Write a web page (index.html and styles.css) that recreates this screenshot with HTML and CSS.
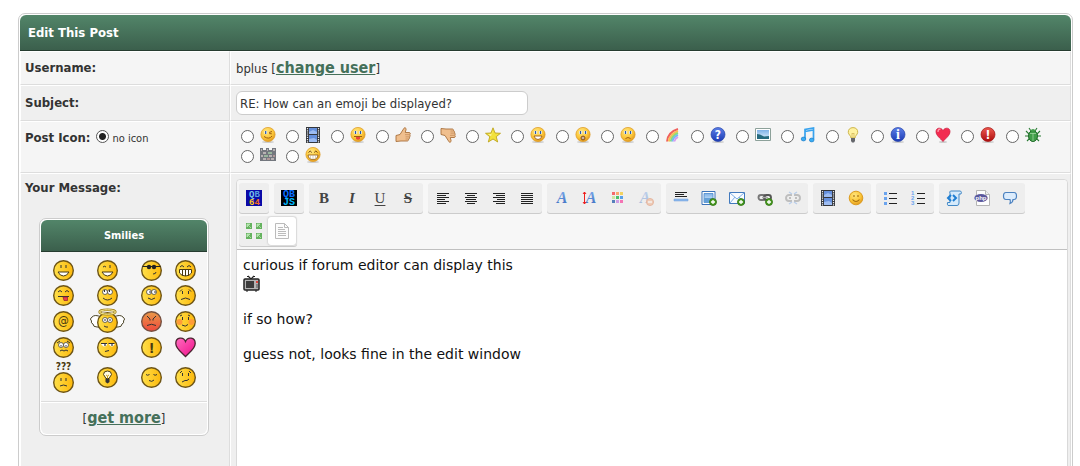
FILE: index.html
```html
<!DOCTYPE html>
<html lang="en">
<head>
  <meta charset="UTF-8">
  <title>Edit This Post</title>
  <link rel="stylesheet" href="styles.css">
</head>
<body>

  <!-- shared icon parts -->
  <svg class="sprite" aria-hidden="true">
    <defs>
      <linearGradient id="gold" x1="0" y1="0" x2="1" y2="0">
        <stop offset="0" stop-color="#ffe04a"/><stop offset="1" stop-color="#fcb80c"/>
      </linearGradient>
      <linearGradient id="angry" x1="0" y1="0" x2="0" y2="1">
        <stop offset="0" stop-color="#e89a48"/><stop offset="1" stop-color="#f0483c"/>
      </linearGradient>
      <radialGradient id="shiny" cx=".4" cy=".3" r=".75">
        <stop offset="0" stop-color="#ffe680"/><stop offset=".6" stop-color="#fbc638"/><stop offset="1" stop-color="#dd921c"/>
      </radialGradient>
      <linearGradient id="blue" x1="0" y1="0" x2="0" y2="1">
        <stop offset="0" stop-color="#5b7fe8"/><stop offset="1" stop-color="#1c3bb4"/>
      </linearGradient>
      <linearGradient id="red" x1="0" y1="0" x2="0" y2="1">
        <stop offset="0" stop-color="#ee5a50"/><stop offset="1" stop-color="#ac0c0c"/>
      </linearGradient>
      <linearGradient id="sky" x1="0" y1="0" x2="0" y2="1">
        <stop offset="0" stop-color="#7fb2e8"/><stop offset="1" stop-color="#e2f1ff"/>
      </linearGradient>
      <linearGradient id="letter" x1="0" y1="0" x2="0" y2="1">
        <stop offset="0" stop-color="#7fb0ee"/><stop offset="1" stop-color="#3c6cc0"/>
      </linearGradient>
      <linearGradient id="pink" x1="0" y1="0" x2="1" y2="1">
        <stop offset="0" stop-color="#ff6cc0"/><stop offset="1" stop-color="#f0108a"/>
      </linearGradient>
    </defs>

    <symbol id="face" viewBox="0 0 21 21">
      <circle cx="10.5" cy="10.5" r="9.8" fill="url(#gold)" stroke="#6e5516" stroke-width="1.4"/>
    </symbol>
    <symbol id="ball" viewBox="0 0 16 16">
      <ellipse cx="8" cy="15" rx="6" ry="1" fill="#ccc"/>
      <circle cx="8" cy="7.5" r="7.1" fill="url(#shiny)" stroke="#e0a02c" stroke-width=".8"/>
    </symbol>
    <symbol id="eyes" viewBox="0 0 16 16">
      <path d="M4.2 4h2.6v3H4.2zM9.2 4h2.6v3H9.2z" fill="#fff"/>
      <path d="M5.5 4v3M10.5 4v3" stroke="#2a5aa8" stroke-width="1.3"/>
    </symbol>
    <symbol id="film" viewBox="0 0 16 16">
      <path d="M1 0h14v16H1z" fill="#33363c"/>
      <path d="M4 1h8v6H4zM4 8h8v7H4z" fill="#6690dc"/>
      <path d="M4 5l4-2 4 2v2H4zM4 12l5-1 3 2v2H4z" fill="#9dbcf2"/>
      <path d="M2.5 1v15M13.5 1v15" stroke="#eee" stroke-width="1.2" stroke-dasharray="1.2 1"/>
    </symbol>
    <symbol id="thumb" viewBox="0 0 16 16">
      <path d="M1 8.5L5 7.5 9 1.2c.5-.9 2.3-.3 2.1 1L10.3 5.5H14c1.6 0 1.7 2 .6 2.3 1 .5.8 2-.3 2.2.6.7.3 2-.8 2.1.3.9-.2 1.9-1.300 1.900H6L1 14.500z" fill="#f0bf8e" stroke="#a8703c" stroke-width=".9"/>
      <path d="M10 7.700h4M10.500 9.900h3.500M10.500 12h3" stroke="#bd8450" stroke-width=".7"/>
    </symbol>
    <symbol id="plus" viewBox="0 0 16 16">
      <circle cx="12" cy="12" r="3.5" fill="#4a9a22" stroke="#2f7412" stroke-width=".8"/>
      <path d="M12 10v4M10 12h4" stroke="#fff" stroke-width="1.3"/>
    </symbol>
    <symbol id="chain" viewBox="0 0 16 16">
      <g fill="none" stroke-width="1.9">
        <rect x="1.5" y="5" width="7" height="5" rx="2.5" stroke="#777"/>
        <rect x="7" y="5" width="7" height="5" rx="2.5" stroke="#555"/>
        <path d="M5 7.5h6" stroke="#aaa" stroke-width="1.3"/>
      </g>
    </symbol>
    <symbol id="arrows" viewBox="0 0 7 7">
      <path d="M0 0h6v6H0z" fill="#65b35f"/>
      <path d="M1 1h3L1 4zM3 3l2 2" fill="#a8dda0" stroke="#c4eabf" stroke-width=".7"/>
    </symbol>
  </svg>

  <form class="tborder">
    <table class="post-table">
      <thead>
        <tr><th class="thead" colspan="2">Edit This Post</th></tr>
      </thead>
      <tbody>
        <tr class="trow1">
          <td class="label-col"><strong>Username:</strong></td>
          <td class="user">bplus [<a href="#">change user</a>]</td>
        </tr>
        <tr class="trow2">
          <td class="label-col"><label class="bold" for="subject">Subject:</label></td>
          <td><input class="textbox" id="subject" type="text" value="RE: How can an emoji be displayed?"></td>
        </tr>
        <tr class="trow1">
          <td class="label-col top icon-label">
            <strong>Post Icon:</strong>
            <label class="no-icon"><input type="radio" name="icon" checked> no icon</label>
          </td>
          <td class="top">
            <div class="post-icons">
              <label><input type="radio" name="icon" aria-label="Wink"><svg viewBox="0 0 16 16"><use href="#ball"/><path d="M4.500 4h2.500v3H4.500z" fill="#fff"/><path d="M5.700 4v3" stroke="#2a5aa8" stroke-width="1.300"/><path d="M9 5.500l3-1M9.200 6.600l2.600.2M4 9.500q5 3.500 8-.5" fill="none" stroke="#a05d10"/></svg></label>
              <label><input type="radio" name="icon" aria-label="Video"><svg viewBox="0 0 16 16"><use href="#film"/></svg></label>
              <label><input type="radio" name="icon" aria-label="Tongue"><svg viewBox="0 0 16 16"><use href="#ball"/><use href="#eyes"/><path d="M4 9.500h8" stroke="#a05d10"/><path d="M6 10h4v1.500q-2 2.500-4 0z" fill="#e8453c"/></svg></label>
              <label><input type="radio" name="icon" aria-label="Thumbs up"><svg viewBox="0 0 16 16"><use href="#thumb"/></svg></label>
              <label><input type="radio" name="icon" aria-label="Thumbs down"><svg viewBox="0 0 16 16"><g transform="matrix(1 0 0 -1 0 16)"><use href="#thumb"/></g></svg></label>
              <label><input type="radio" name="icon" aria-label="Star"><svg viewBox="0 0 16 16"><path d="M8 .8l2 5.200 5.500.3-4.300 3.400 1.500 5.300L8 12l-4.700 3 1.500-5.300L.5 6.300 6 6z" fill="#f2e13c" stroke="#bda51c" stroke-width=".9"/><path d="M8 3L7 7 3 7.200 6 9z" fill="#fff9ae"/></svg></label>
              <label><input type="radio" name="icon" aria-label="Smile"><svg viewBox="0 0 16 16"><use href="#ball"/><use href="#eyes"/><path d="M4 9h8q-1 3.500-4 3.500T4 9z" fill="#fff" stroke="#a05d10" stroke-width=".9"/></svg></label>
              <label><input type="radio" name="icon" aria-label="Shocked"><svg viewBox="0 0 16 16"><use href="#ball"/><use href="#eyes"/><ellipse cx="8" cy="11" rx="2" ry="1.900" fill="#c9b4a0" stroke="#8a4c10"/></svg></label>
              <label><input type="radio" name="icon" aria-label="Sad"><svg viewBox="0 0 16 16"><use href="#ball"/><use href="#eyes"/><path d="M5.500 11.500q2.500-2 5 0" fill="none" stroke="#a05d10"/></svg></label>
              <label><input type="radio" name="icon" aria-label="Rainbow"><svg viewBox="0 0 16 16"><g fill="none" stroke-width="1.900"><path d="M2 14.500Q3 5 13 2" stroke="#f0605c"/><path d="M3.800 14.500Q5 7 13 4" stroke="#f8bd56"/><path d="M5.600 14.500Q7 8.500 13 6" stroke="#8ade7a"/><path d="M7.400 14.500Q8 10 13 8" stroke="#76b8f6"/><path d="M9.200 14.500Q10 11.500 13 10" stroke="#d99af0"/></g></svg></label>
              <label><input type="radio" name="icon" aria-label="Question"><svg viewBox="0 0 16 16"><ellipse cx="8" cy="15" rx="6" ry="1" fill="#ccc"/><circle cx="8" cy="7.500" r="7" fill="url(#blue)" stroke="#2843a8" stroke-width=".7"/><text class="sign" x="8" y="12">?</text></svg></label>
              <label><input type="radio" name="icon" aria-label="Photo"><svg viewBox="0 0 16 16"><path d="M.5 1.500h15v12H.5z" fill="#fff" stroke="#8da19a"/><path d="M2 3h12v9H2z" fill="url(#sky)"/><path d="M2 7l3 .5 4 2 5-.5v3H2z" fill="#266b80"/></svg></label>
              <label><input type="radio" name="icon" aria-label="Music"><svg viewBox="0 0 16 16"><path d="M5 12V2.500L13.500 1v11.500M5 4.500L13.500 3" fill="none" stroke="#38a3ee" stroke-width="1.700"/><ellipse cx="3.500" cy="12" rx="2.300" ry="1.900" fill="#39adf5" stroke="#1e7dc6" stroke-width=".7"/><ellipse cx="11.700" cy="13" rx="2.300" ry="1.900" fill="#39adf5" stroke="#1e7dc6" stroke-width=".7"/></svg></label>
              <label><input type="radio" name="icon" aria-label="Lightbulb"><svg viewBox="0 0 16 16"><path d="M8 .6C4.800.6 3 2.800 3.300 5.500 3.500 7.500 6 9 6 11h4c0-2 2.500-3.500 2.700-5.500C13 2.800 11.200.6 8 .6z" fill="#fff2a0" stroke="#cdb64c"/><path d="M7 11V6l1 1 1-1v5" fill="none" stroke="#d1b558" stroke-width=".7"/><path d="M6 11h4v3l-1 1.500H7L6 14z" fill="#65676c"/></svg></label>
              <label><input type="radio" name="icon" aria-label="Information"><svg viewBox="0 0 16 16"><ellipse cx="8" cy="15" rx="6" ry="1" fill="#ccc"/><circle cx="8" cy="7.500" r="7" fill="url(#blue)" stroke="#2843a8" stroke-width=".7"/><text class="sign serif" x="8" y="12">i</text></svg></label>
              <label><input type="radio" name="icon" aria-label="Heart"><svg viewBox="0 0 16 16"><ellipse cx="8" cy="15" rx="4" ry="1" fill="#ccc"/><path d="M8 14.500C5 11 1 8.500 1 4.500 1 .5 6 0 8 3.500 10 0 15 .5 15 4.500c0 4-4 6.500-7 10z" fill="#f22c50" stroke="#c8183a" stroke-width=".7"/><path d="M3 5q0-3 2.500-2.800" fill="none" stroke="#ff9cac" stroke-width="1.300"/></svg></label>
              <label><input type="radio" name="icon" aria-label="Exclamation"><svg viewBox="0 0 16 16"><ellipse cx="8" cy="15" rx="6" ry="1" fill="#ccc"/><circle cx="8" cy="7.500" r="7" fill="url(#red)" stroke="#a01212" stroke-width=".7"/><text class="sign" x="8" y="12">!</text></svg></label>
              <label><input type="radio" name="icon" aria-label="Bug"><svg viewBox="0 0 16 16"><path d="M4 1l2 3M12 1l-2 3M1 4l3 3M15 4l-3 3M0 9h16M2 14l3-3M14 14l-3-3" stroke="#2b7c35" stroke-width="1.100"/><ellipse cx="8" cy="9" rx="4.500" ry="5.500" fill="#3f9d48" stroke="#226b2b"/><path d="M5 4q3-4 6 0z" fill="#43a04c"/><path d="M8 6v8M5 6.500h6" stroke="#9ed6a0" stroke-width=".8"/></svg></label>
              <label><input type="radio" name="icon" aria-label="Brick"><svg viewBox="0 0 16 16"><path d="M0 1h3v2h3V1h3v2h3V1h4v13H0z" fill="#73777e"/><path d="M1 2h1v2H1zM7 2h1v2H7zM13 2h2v2h-2zM3 5h3v2H3zM1 8h2v2H1zM9 8h3v2H9zM3 11h3v2H3zM11 11h3v2h-3z" fill="#b8b1b3"/><path d="M8 5h4v2H8zM4 8h4v2H4z" fill="#98b59c"/><path d="M13 8h2v2h-2zM7 11h3v2H7z" fill="#b09696"/></svg></label>
              <label><input type="radio" name="icon" aria-label="Big grin"><svg viewBox="0 0 16 16"><use href="#ball"/><path d="M3.500 5.500q1.700-3 3.300 0M9.200 5.500q1.600-3 3.300 0" fill="none" stroke="#704510"/><path d="M3 8h10q-.5 4.500-5 4.500T3 8z" fill="#fff" stroke="#8a5612" stroke-width=".8"/><path d="M5.500 8v4M8 8v4.500M10.500 8v4" stroke="#c8b48c" stroke-width=".6"/></svg></label>
            </div>
          </td>
        </tr>
        <tr class="trow2">
          <td class="label-col top message">
            <strong>Your Message:</strong>

            <div class="smilies tborder">
              <div class="thead">Smilies</div>
              <div class="smilie-grid">
                <svg viewBox="0 0 21 21"><use href="#face"/><path d="M8 5v3M13 5v3" stroke="#333"/><path d="M5 12h11q-2 4-5.500 4T5 12z" fill="#fff" stroke="#4a3a10"/></svg>
                <svg viewBox="0 0 21 21"><use href="#face"/><path d="M6 7q1.500-1.500 3 0M13 5v3" fill="none" stroke="#333"/><path d="M5 12h11q-2 4-5.500 4T5 12z" fill="#fff" stroke="#4a3a10"/></svg>
                <svg viewBox="0 0 21 21"><use href="#face"/><path d="M1.500 6.500h18" stroke="#222"/><circle cx="8" cy="7" r="2.200" fill="#222"/><circle cx="13" cy="7" r="2.200" fill="#222"/><path d="M12 14q3 0 3-2" fill="none" stroke="#333"/></svg>
                <svg viewBox="0 0 21 21"><use href="#face"/><path d="M5 7q2-3 4 0M12 7q2-3 4 0" fill="none" stroke="#333"/><path d="M4.500 9.500h12V13q-2 3-6 3t-6-3z" fill="#fff" stroke="#4a3a10"/><path d="M7.500 10v5.500M10.500 10v6M13.500 10v5.500" stroke="#4a3a10"/></svg>

                <svg viewBox="0 0 21 21"><use href="#face"/><path d="M5 7q2-3 4 0M12 7q2-3 4 0M5 11.500h11" fill="none" stroke="#333"/><path d="M10 12h4.500v3.500H11z" fill="#e83c50" stroke="#93202c" stroke-width=".7"/></svg>
                <svg viewBox="0 0 21 21"><use href="#face"/><circle cx="8" cy="7" r="2.500" fill="#fff" stroke="#333" stroke-width=".7"/><circle cx="13" cy="7" r="2.500" fill="#fff" stroke="#333" stroke-width=".7"/><path d="M7.500 5v2M12.500 5v2M6 13q4.500 4 9 0" fill="none" stroke="#333"/></svg>
                <svg viewBox="0 0 21 21"><use href="#face"/><circle cx="8" cy="7" r="2.500" fill="#fff" stroke="#333" stroke-width=".7"/><circle cx="13" cy="7" r="2.500" fill="#fff" stroke="#333" stroke-width=".7"/><path d="M9 6v2M14 6v2M7 13q3.500 3 7 0" fill="none" stroke="#333"/></svg>
                <svg viewBox="0 0 21 21"><use href="#face"/><path d="M7.500 6v3M13.500 6v3M5 6.500l2-2M14 4.500l2 2M6 14.500q4.500-3 9 0" fill="none" stroke="#333"/></svg>

                <svg viewBox="0 0 21 21"><use href="#face"/><text class="glyph" x="10.500" y="14" font-size="12">@</text></svg>
                <svg class="wide" viewBox="0 0 35 25"><path d="M11 8Q5 5 2 8q-3 2-.5 4-1 2 1.500 3 0 3 4 3h4zM24 8q6-3 9 0 3 2 .5 4 1 2-1.500 3 0 3-4 3h-4z" fill="#fff" stroke="#4a4428"/><use href="#face" x="7" y="3" width="21" height="21"/><ellipse cx="17.500" cy="3" rx="8" ry="2.200" fill="none" stroke="#a08018" stroke-width="2.400"/><ellipse cx="17.500" cy="3" rx="8" ry="2.200" fill="none" stroke="#fff3a0"/><circle cx="15" cy="11" r="2.500" fill="#fff" stroke="#333" stroke-width=".7"/><circle cx="20" cy="11" r="2.500" fill="#fff" stroke="#333" stroke-width=".7"/><path d="M15 10v2M20 10v2M14 17l2 1h2" fill="none" stroke="#333"/></svg>
                <svg viewBox="0 0 21 21"><circle cx="10.500" cy="10.500" r="9.800" fill="url(#angry)" stroke="#745040" stroke-width="1.400"/><path d="M6 5l3 3v1.500M15 5l-3 3v1.500M6 14.500q4.500-2.500 9 0" fill="none" stroke="#333"/></svg>
                <svg viewBox="0 0 21 21"><use href="#face"/><circle cx="4.500" cy="11" r="3" fill="#ff9c38"/><circle cx="16.500" cy="11" r="3" fill="#ff9c38"/><path d="M7.500 6v3M13.500 6v3M5 5l2-1M13 4l2 1M7 14q3.500 2.500 6-.5" fill="none" stroke="#333"/></svg>

                <svg viewBox="0 0 21 21"><use href="#face"/><circle cx="8" cy="8" r="2.500" fill="#fff" stroke="#333" stroke-width=".7"/><circle cx="13" cy="8" r="2.500" fill="#fff" stroke="#333" stroke-width=".7"/><path d="M8 8v1.500M13 8v1.500M4 6l3-2M14 4l3 2M7 14l2-1 2 1 2-1 2 1" fill="none" stroke="#333"/></svg>
                <svg viewBox="0 0 21 21"><use href="#face"/><path d="M4 7h6v1q-3 3-5 0zM12 7h6l-1 1q-2 3-4.500 0z" fill="#fff"/><path d="M4 6.500h6M11.500 6.500h6M8 7v2M15 7v2M8 14.500l4-1" stroke="#333" stroke-width="1.200"/></svg>
                <svg viewBox="0 0 21 21"><use href="#face"/><text class="glyph bold" x="10.500" y="16" font-size="14">!</text></svg>
                <svg viewBox="0 0 21 21"><path d="M10.500 19.500C7 15.500.8 12 .8 6.500.8 0 8.500-.5 10.500 4.500c2-5 9.700-4.500 9.700 2 0 5.500-6.200 9-9.700 13z" fill="url(#pink)" stroke="#4c2430" stroke-width="1.300"/></svg>

                <svg class="tall" viewBox="0 0 21 31"><text class="glyph bold" x="10.500" y="8" font-size="10">???</text><use href="#face" x="0" y="10" width="21" height="21"/><path d="M8 16v3M13 16v3M7 24q3.500-2 7 0" fill="none" stroke="#333"/></svg>
                <svg viewBox="0 0 21 21"><use href="#face"/><path d="M10.500 4q-4 0-4 3.500l2.500 4h3l2.500-4q0-3.500-4-3.500z" fill="#fffbe0" stroke="#4a3a10"/><path d="M9 8l1.500 1L12 8M10.500 9v3" fill="none" stroke="#c89c20"/><path d="M8.500 11.500h4V15l-2 1.500-2-1.500z" fill="#333"/></svg>
                <svg viewBox="0 0 21 21"><use href="#face"/><path d="M5 7.500q1.500 1.500 3.500 0M12.500 7.500q1.500 1.500 3.500 0M8 13.500q3 2 5-.5" fill="none" stroke="#333"/></svg>
                <svg viewBox="0 0 21 21"><use href="#face"/><path d="M7.500 6v3M13.500 6v3M5 6l2-2M14 4l2 2M7 15l3-1.500h2L14 12" fill="none" stroke="#333"/></svg>
              </div>
              <div class="more">[<a href="#">get more</a>]</div>
            </div>
          </td>
          <td class="top">
            <div class="editor">
              <div class="toolbar">
                <div class="group">
                  <button type="button" title="QB64"><svg viewBox="0 0 16 16"><path d="M0 0h16v16H0z" fill="#0a0aa8"/><text class="pixel" x="3" y="7" fill="#7cc8e8">Q<tspan fill="#5aa4e0">B</tspan></text><text class="pixel" x="3" y="15" fill="#ffc820">6<tspan fill="#f06a1c">4</tspan></text></svg></button>
                </div>
                <div class="group">
                  <button type="button" title="QBJS"><svg viewBox="0 0 16 16"><path d="M0 0h16v16H0z" fill="#000"/><text class="pixel large" x="2" y="7" fill="#0a6cff">QB</text><text class="pixel large" x="2" y="15" fill="#00b8ff">JS</text></svg></button>
                </div>
                <div class="group">
                  <button type="button" class="letter bold" title="Bold">B</button>
                  <button type="button" class="letter italic" title="Italic">I</button>
                  <button type="button" class="letter underline" title="Underline">U</button>
                  <button type="button" class="letter strike" title="Strikethrough">S</button>
                </div>
                <div class="group">
                  <button type="button" title="Align left"><svg viewBox="0 0 16 16"><path d="M2 3.500h12M2 5.500h9M2 7.500h12M2 9.500h8M2 11.500h12M2 13.500h9" stroke="#222"/></svg></button>
                  <button type="button" title="Center"><svg viewBox="0 0 16 16"><path d="M2 3.500h12M4 5.500h8M2 7.500h12M3 9.500h10M2 11.500h12M4 13.500h8" stroke="#222"/></svg></button>
                  <button type="button" title="Align right"><svg viewBox="0 0 16 16"><path d="M2 3.500h12M5 5.500h9M2 7.500h12M6 9.500h8M2 11.500h12M5 13.500h9" stroke="#222"/></svg></button>
                  <button type="button" title="Justify"><svg viewBox="0 0 16 16"><path d="M2 3.500h12M2 5.500h12M2 7.500h12M2 9.500h12M2 11.500h12M2 13.500h12" stroke="#222"/></svg></button>
                </div>
                <div class="group">
                  <button type="button" title="Font Name"><svg viewBox="0 0 16 16"><text class="font-a" x="8" y="13">A</text></svg></button>
                  <button type="button" title="Font Size"><svg viewBox="0 0 16 16"><text class="font-a" x="9" y="13">A</text><path d="M2.500 2v12M1 4l1.500-2L4 4M1 12l1.500 2L4 12" fill="none" stroke="#ee1c1c"/></svg></button>
                  <button type="button" title="Font Color"><svg viewBox="0 0 16 16"><path d="M2 2h3v3H2z" fill="#f4686c"/><path d="M6 2h3v3H6z" fill="#fba66c"/><path d="M10 2h3v3h-3z" fill="#f2d260"/><path d="M2 6h3v3H2z" fill="#cbe6a4"/><path d="M6 6h3v3H6z" fill="#48c06c"/><path d="M10 6h3v3h-3z" fill="#58a0e8"/><path d="M2 10h3v3H2z" fill="#5580ba"/><path d="M6 10h3v3H6z" fill="#cf9ee4"/><path d="M10 10h3v3h-3z" fill="#f474b4"/></svg></button>
                  <button type="button" class="faded" title="Remove Formatting"><svg viewBox="0 0 16 16"><text class="font-a" x="7" y="13">A</text><circle cx="12" cy="12" r="3.500" fill="#f09a6a" stroke="#d8642a"/><path d="M10 12h4" stroke="#fff" stroke-width="1.400"/></svg></button>
                </div>
                <div class="group">
                  <button type="button" title="Insert a horizontal rule"><svg viewBox="0 0 16 16"><path d="M2 2.500h12M2 4.500h9M2 6.500h12" stroke="#222"/><path d="M1 9h14v2H1z" fill="#8cb8ec" stroke="#6f9fdc" stroke-width=".5"/></svg></button>
                  <button type="button" title="Insert an image"><svg viewBox="0 0 16 16"><path d="M1 1.500h13v13H1z" fill="#fff" stroke="#3b73ba"/><path d="M3 3.500h9v9H3z" fill="url(#sky)" stroke="#4a88cc" stroke-width=".8"/><path d="M3 8h9v4.500H3z" fill="#65a0d8"/><use href="#plus"/></svg></button>
                  <button type="button" title="Insert an email"><svg viewBox="0 0 16 16"><path d="M.500 2.500h15v11H.5z" fill="#f8fbff" stroke="#4179bd"/><path d="M1 3l7 6 7-6M1 13l5-6M15 13l-5-6" fill="none" stroke="#7caee6"/><use href="#plus"/></svg></button>
                  <button type="button" title="Insert a link"><svg viewBox="0 0 16 16"><use href="#chain"/><use href="#plus"/></svg></button>
                  <button type="button" class="faded" title="Unlink"><svg viewBox="0 0 16 16"><path d="M7 5H4a3 3 0 0 0 0 6h3M9 5h3a3 3 0 0 1 0 6H9M4 8h2M10 8h2" fill="none" stroke="#777" stroke-width="1.900"/><path d="M4 2l3 2M12 2L9 4M4 14l3-2M12 14l-3-2" stroke="#6ba0e8" stroke-width="1.300"/></svg></button>
                </div>
                <div class="group">
                  <button type="button" title="Insert a video"><svg viewBox="0 0 16 16"><use href="#film"/></svg></button>
                  <button type="button" title="Insert an emoticon"><svg viewBox="0 0 16 16"><circle cx="8" cy="8" r="6.800" fill="url(#shiny)" stroke="#dc9c20"/><path d="M6 5v2M10 5v2M4.500 9.500q3.500 4 7 0" fill="none" stroke="#a46c10" stroke-width="1.100"/></svg></button>
                </div>
                <div class="group">
                  <button type="button" title="Bullet list"><svg viewBox="0 0 16 16"><path d="M1 2h3v3H1zM1 7h3v3H1zM1 12h3v3H1z" fill="#6ba4ee"/><path d="M6 3.500h8M6 8.500h8M6 13.500h8" stroke="#222"/></svg></button>
                  <button type="button" title="Numbered list"><svg viewBox="0 0 16 16"><text class="digit" x="0" y="5">1</text><text class="digit" x="0" y="10">2</text><text class="digit" x="0" y="15">3</text><path d="M6 3.500h8M6 8.500h8M6 13.500h8" stroke="#222"/></svg></button>
                </div>
                <div class="group">
                  <button type="button" title="Code"><svg viewBox="0 0 16 16"><path d="M4.500 1h10q1.500 1 .5 3h-2v9q0 2.500-2 2.500H2q-1-1-.5-3H4V3q-1-1 .5-2z" fill="#d5eafb" stroke="#4288c6"/><path d="M5 5L2 8l3 3M7 5l3 3-3 3" fill="none" stroke="#1f7ed2" stroke-width="2"/></svg></button>
                  <button type="button" title="PHP"><svg viewBox="0 0 16 16"><path d="M2.500.500h9l4 4v11h-13z" fill="#fdfdfd" stroke="#b5b5b5"/><path d="M11.500.500v4h4" fill="#eee" stroke="#b5b5b5"/><ellipse cx="7" cy="8" rx="6.700" ry="4" fill="#5a579c"/><text class="php" x="7" y="10">php</text></svg></button>
                  <button type="button" title="Insert a Quote"><svg viewBox="0 0 16 16"><path d="M4 2.500h8q2.500 0 2.500 3.500T12 9.500h-1q0 3-3 4 .8-2 0-4H4Q1.500 9.500 1.500 6T4 2.500z" fill="#dcecfc" stroke="#4c82c0" stroke-width="1.200"/></svg></button>
                </div>
                <div class="group">
                  <button type="button" title="Maximize"><svg viewBox="0 0 16 16"><use href="#arrows" x="0" y="0" width="7" height="7"/><use href="#arrows" x="10" y="0" width="7" height="7"/><use href="#arrows" x="0" y="10" width="7" height="7"/><use href="#arrows" x="10" y="10" width="7" height="7"/></svg></button>
                  <button type="button" class="active" title="View source"><svg viewBox="0 0 16 16"><path d="M1.500.500h9l4 4v11h-13z" fill="#fcfcfc" stroke="#bbb"/><path d="M10.500.500v4h4" fill="none" stroke="#bbb"/><path d="M4 4.500h5M4 6.500h7M4 8.500h8M4 10.500h8M4 12.500h8" stroke="#bbb"/></svg></button>
                </div>
              </div>
              <div class="content" contenteditable="true" role="textbox" aria-multiline="true" aria-label="Your Message" spellcheck="false">curious if forum editor can display this<br><svg class="tv" viewBox="0 0 17 17"><path d="M5 1l3 3 3-3M4 1.500h2M10 1.500h2" fill="none" stroke="#222" stroke-width="1.200"/><rect x="1" y="4" width="15" height="11" rx="1" fill="#b4b4b4" stroke="#222" stroke-width="1.500"/><path d="M3 6h8v7H3z" fill="#3c3c3c"/><path d="M13 6h2v2h-2z" fill="#e0453c"/><path d="M13 10h2M13 12h2" stroke="#555"/><path d="M3 16h2M12 16h2" stroke="#222"/></svg><br><br>if so how?<br><br>guess not, looks fine in the edit window</div>
            </div>
          </td>
        </tr>
      </tbody>
    </table>
  </form>

</body>
</html>
```
FILE: styles.css
```css
* {
  box-sizing: border-box;
}

body {
  height: 100vh;
  margin: 0;
  padding: 13px 7px 0 18px;
  overflow: hidden;
  background: #fff;
  color: #333;
  font-family: Tahoma, "DejaVu Sans Condensed", sans-serif;
  font-size: 13px;
  line-height: 18px;
}

.sprite {
  position: absolute;
  width: 0;
  height: 0;
}

svg {
  display: block;
  width: 16px;
  height: 16px;
  overflow: visible;
}

a {
  color: #45705a;
  font-size: 16px;
  font-weight: bold;
}

.tborder {
  padding: 1px;
  border: 1px solid #ccc;
  border-radius: 7px;
  background: #fff;
}

.thead {
  padding: 8px;
  border-bottom: 1px solid #263c30;
  border-radius: 6px 6px 0 0;
  background: linear-gradient(#528569, #3b5f4c);
  color: #fff;
  font-weight: bold;
  text-align: left;
}

.post-table {
  width: 100%;
  border-spacing: 0;
}

.post-table th {
  height: 36px;
}

td {
  padding: 5px;
  border: 1px solid;
  border-color: #fff #ddd #ddd #fff;
}

.label-col {
  width: 210px;
  padding-left: 4px;
}

.trow1 {
  background: #f5f5f5;
}

.trow2 {
  background: #efefef;
}

.top {
  vertical-align: top;
}

.bold {
  font-weight: bold;
}

.user {
  height: 34px;
}

.textbox {
  display: block;
  width: 292px;
  height: 24px;
  padding: 3px;
  border: 1px solid #ccc;
  border-radius: 6px;
  background: #fff;
  color: #333;
  font-family: inherit;
  font-size: 13px;
}

input[type="radio"] {
  appearance: none;
  flex: none;
  width: 13px;
  height: 13px;
  margin: 0;
  border: 1px solid #666;
  border-radius: 50%;
  background: #fff;
}

input[type="radio"]:checked {
  border-color: #555;
  background: radial-gradient(circle, #222 3px, #fff 4px);
}

.icon-label {
  padding-top: 7px;
}

.no-icon {
  margin-left: 2px;
  font-size: 11px;
}

.no-icon input {
  vertical-align: -1px;
}

.post-icons {
  display: flex;
  flex-wrap: wrap;
}

.post-icons label {
  display: flex;
  gap: 6px;
  width: 45px;
  height: 20px;
  padding-left: 5px;
}

.post-icons input[type="radio"] {
  margin-top: 3px;
}

.message {
  padding-bottom: 20px;
}

.smilies {
  width: 170px;
  margin: 21px auto 0 14px;
  font-size: 11px;
}

.smilies .thead {
  padding: 7px;
  line-height: 17px;
  text-align: center;
}

.smilie-grid {
  display: grid;
  grid-template-columns: 44px 44px 44px 24px;
  grid-template-rows: 25px 25px 26px 26px 34px;
  place-items: center;
  padding: 6px 0 7px;
  border-bottom: 1px solid #ddd;
  background: #f5f5f5;
}

.smilie-grid svg {
  width: 21px;
  height: 21px;
}

.smilie-grid .wide {
  width: 35px;
  height: 25px;
}

.smilie-grid .tall {
  height: 31px;
}

.glyph {
  fill: #4a3a10;
  font-family: "DejaVu Sans Condensed", sans-serif;
  text-anchor: middle;
}

.more {
  padding: 6px 8px;
  border-top: 1px solid #fff;
  border-radius: 0 0 6px 6px;
  background: #efefef;
  font-size: 13px;
  text-align: center;
}

.editor {
  min-height: 330px;
  margin-right: -3px;
  border: 1px solid #d9d9d9;
  border-radius: 4px;
  background: #fff;
}

.toolbar {
  display: flex;
  flex-wrap: wrap;
  gap: 3px 5px;
  padding: 3px 2px;
  border-bottom: 1px solid #c0c0c0;
  border-radius: 4px 4px 0 0;
  background: #f7f7f7;
}

.group {
  display: flex;
  padding: 1px;
  border-radius: 3px;
  background: #eee;
  box-shadow: 0 1px 0 #ccc;
}

.group button {
  display: flex;
  align-items: center;
  justify-content: center;
  width: 28px;
  height: 28px;
  padding: 0;
  border: 0;
  border-radius: 3px;
  background: none;
}

.group .active {
  background: #fff;
  box-shadow: 0 0 2px #aaa;
}

.letter {
  color: #444;
  font-family: "Liberation Serif", serif;
  font-size: 15px;
}

.italic {
  font-style: italic;
  font-weight: bold;
}

.underline {
  text-decoration: underline;
  text-underline-offset: 2px;
}

.strike {
  font-weight: bold;
  text-decoration: line-through;
}

.faded {
  opacity: .4;
}

.font-a {
  fill: url(#letter);
  font-family: "Liberation Serif", serif;
  font-size: 16px;
  font-style: italic;
  font-weight: bold;
  text-anchor: middle;
}

.pixel {
  font-family: "Liberation Mono", monospace;
  font-size: 9px;
  font-weight: bold;
}

.pixel.large {
  font-size: 10px;
}

.sign {
  fill: #fff;
  font-family: "DejaVu Sans Condensed", sans-serif;
  font-size: 12px;
  font-weight: bold;
  text-anchor: middle;
}

.sign.serif {
  font-family: "Liberation Serif", serif;
  font-size: 14px;
}

.digit {
  fill: #6ba4ee;
  font-family: "Liberation Sans", sans-serif;
  font-size: 6px;
  font-weight: bold;
}

.php {
  fill: #fff;
  font-family: "Liberation Sans", sans-serif;
  font-size: 6px;
  font-weight: bold;
  text-anchor: middle;
}

.content {
  padding: 7px 6px;
  color: #111;
  font-family: Verdana, "DejaVu Sans", sans-serif;
  font-size: 14px;
  line-height: 1.25;
  outline: none;
}

.tv {
  display: inline-block;
  width: 17px;
  height: 17px;
  vertical-align: -3px;
}
```
